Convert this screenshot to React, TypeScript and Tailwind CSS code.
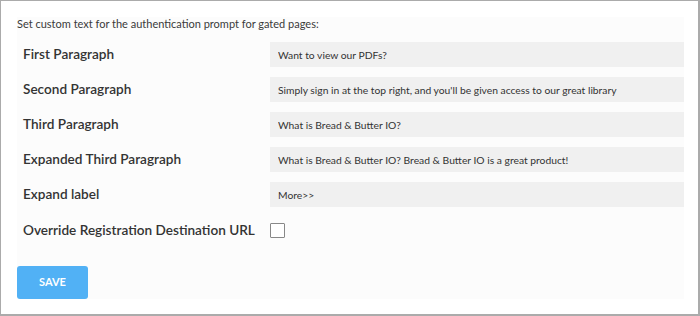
const rows = [
  { label: 'First Paragraph', value: 'Want to view our PDFs?' },
  { label: 'Second Paragraph', value: "Simply sign in at the top right, and you'll be given access to our great library" },
  { label: 'Third Paragraph', value: 'What is Bread & Butter IO?' },
  { label: 'Expanded Third Paragraph', value: 'What is Bread & Butter IO? Bread & Butter IO is a great product!' },
  { label: 'Expand label', value: 'More>>' },
];

export default function App() {
  return (
    <div className="w-[700px] h-[316px] bg-white border-l border-t border-r-2 border-b-2 border-[#ababab] pl-[16px] pt-[16px] pr-[14px] pb-[15px] font-['Lato',sans-serif] text-[#333]">
      <div className="bg-[#fcfcfc] h-[282px] flex flex-col">
        <p className="text-[11px] leading-[16px] -mt-[1px] text-[#3a3a3a]">
          Set custom text for the authentication prompt for gated pages:
        </p>
        <div className="mt-[10px] flex flex-col gap-[10px]">
          {rows.map((r) => (
            <div key={r.label} className="flex items-center h-[25px]">
              <label className="w-[253px] pl-[6px] text-[13.6px] font-semibold whitespace-nowrap text-[#333]">{r.label}</label>
              <input
                readOnly
                value={r.value}
                className="flex-1 h-[25px] bg-[#f0f0f0] px-[8px] text-[10.3px] text-[#333] outline-none"
              />
            </div>
          ))}
          <div className="flex items-center h-[25px] mt-[1px]">
            <label className="w-[253px] pl-[6px] text-[13.6px] font-semibold whitespace-nowrap text-[#333]">
              Override Registration Destination URL
            </label>
            <span className="w-[15px] h-[15px] border border-[#888] bg-white rounded-[1px]" />
          </div>
        </div>
        <button className="mt-auto w-[71px] h-[33px] rounded-[3px] bg-[#51b1f5] text-white text-[11px] font-bold">
          SAVE
        </button>
      </div>
    </div>
  );
}
